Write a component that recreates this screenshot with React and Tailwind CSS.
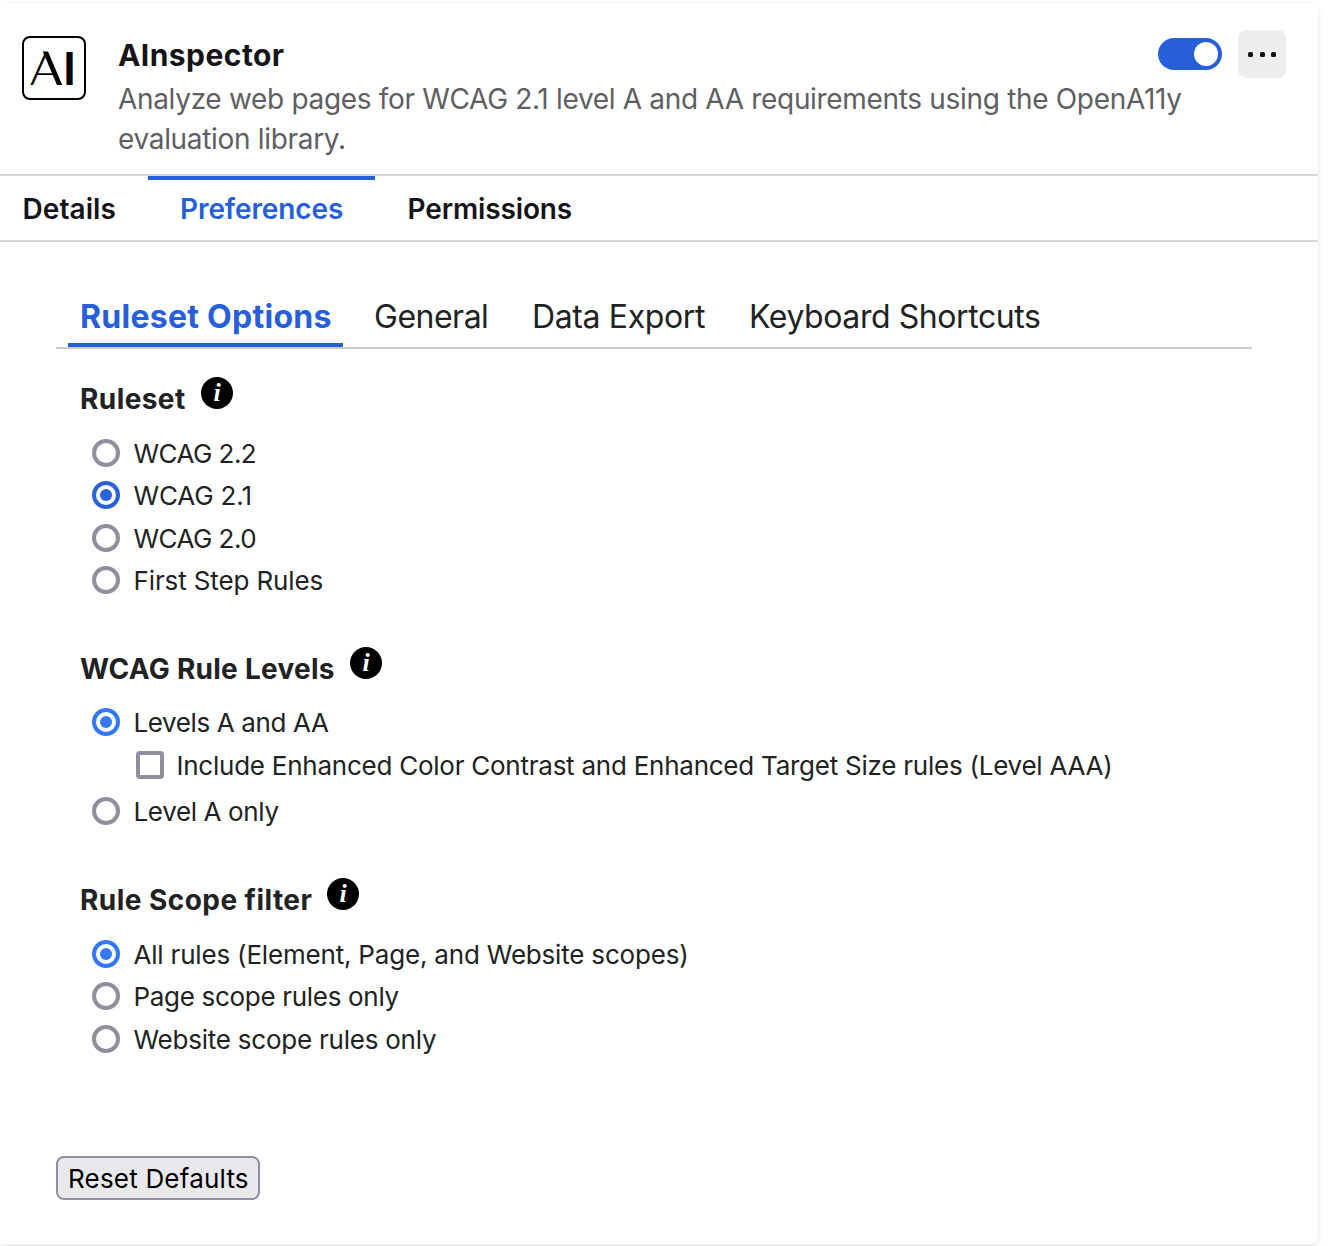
function InfoIcon() {
  return (
    <svg className="size-8 shrink-0" viewBox="0 0 32 32" role="img" aria-label="More information">
      <circle cx="16" cy="16" r="16" fill="#000" />
      <text x="16.2" y="24.4" textAnchor="middle" fill="#fff" fontFamily="'Liberation Serif', serif" fontSize="26" fontWeight="700" fontStyle="italic">i</text>
    </svg>
  );
}

function Logo() {
  return (
    <svg className="size-16 shrink-0" viewBox="0 0 64 64" role="img" aria-label="AInspector logo">
      <defs>
        <clipPath id="logo-inner">
          <rect x="8" y="15.5" width="48" height="33.5" />
        </clipPath>
      </defs>
      <rect x="1" y="1" width="62" height="62" rx="7" fill="#fff" stroke="#000" strokeWidth="2" />
      <text x="7.8" y="49" fontFamily="Lato, sans-serif" fontSize="45.5" fontWeight="300" textLength="32.4" lengthAdjust="spacingAndGlyphs">A</text>
      <path d="M22.6 13.5 38.4 51" stroke="#000" strokeWidth="4.8" clipPath="url(#logo-inner)" />
      <text x="40.8" y="49" fontFamily="Lato, sans-serif" fontSize="45.5" fontWeight="700">I</text>
    </svg>
  );
}

function Heading({ children, className, gap }) {
  return (
    <div className={`flex ${gap}`}>
      <h2 className={`mt-1 h-9 whitespace-nowrap text-[28px] leading-9 font-bold ${className}`}>{children}</h2>
      <InfoIcon />
    </div>
  );
}

function Radio({ children, checked, tone = "border-[#3478f6]", dot = "bg-[#3478f6]", className }) {
  return (
    <label className="flex h-7 items-center gap-[13.5px]">
      <span className={`flex size-7 shrink-0 items-center justify-center rounded-full border-4 ${checked ? tone : "border-[#8f8f9d]"}`}>
        {checked && <span className={`size-3 rounded-full ${dot}`} />}
      </span>
      <span className={`pt-0.5 whitespace-nowrap text-[26px] leading-7 ${className}`}>{children}</span>
    </label>
  );
}

export default function App() {
  return (
    <div className="h-[1246px] w-[1338px] overflow-hidden bg-white pt-1 font-['Inter',sans-serif] text-[#212223]">
      <main className="h-[1240px] w-[1318px] rounded-r-lg bg-white shadow-[0_2px_6px_rgba(0,0,0,0.11)]">
        <header className="flex h-[170px] pl-[22px]">
          <div className="mt-8">
            <Logo />
          </div>
          <div className="ml-8 mt-[31px] w-[1040px] shrink-0 text-[#15141a]">
            <h1 className="text-[30px] leading-10 font-bold tracking-[0.45px]">AInspector</h1>
            <p className="mt-1 whitespace-nowrap text-[28px] leading-10 tracking-[-0.32px] text-[#5e5e63]">
              Analyze web pages for WCAG 2.1 level A and AA requirements using the OpenA11y
              <br />
              evaluation library.
            </p>
          </div>
          <div className="mt-[26px] flex h-12 items-center gap-4">
            <button aria-label="Enable" className="flex h-8 w-16 items-center justify-end rounded-full bg-[#265fd9] pr-1">
              <span className="size-6 rounded-full bg-white" />
            </button>
            <button aria-label="More options" className="flex size-12 items-center justify-center gap-[6.5px] rounded-lg bg-[#eeeeee]">
              <span className="size-[5px] rounded-[1.5px] bg-[#15141a]" />
              <span className="size-[5px] rounded-[1.5px] bg-[#15141a]" />
              <span className="size-[5px] rounded-[1.5px] bg-[#15141a]" />
            </button>
          </div>
        </header>

        <nav className="flex h-[68px] border-y-2 border-[#d7d7db] text-[28px] leading-[59px] font-semibold text-[#15141a]">
          <span className="w-[148px] border-t-4 border-transparent pl-[22.5px] tracking-[0.08px]">Details</span>
          <span className="w-[227px] border-t-4 border-[#265fd9] pl-8 tracking-[-0.09px] text-[#265fd9]">Preferences</span>
          <span className="border-t-4 border-transparent pl-[32.5px] tracking-[-0.13px]">Permissions</span>
        </nav>

        <div className="pl-14">
          <nav className="mt-[43px] flex h-16 w-[1196px] whitespace-nowrap border-b-2 border-[#cccccc] pl-3 text-[32px] leading-[64px]">
            <span className="flex w-[275px] flex-col">
              <span className="h-[58px] shrink-0 pl-3 font-bold tracking-[0.27px] text-[#265fd9]">Ruleset Options</span>
              <span className="h-1 shrink-0 bg-[#265fd9]" />
            </span>
            <span className="w-[157px] pl-[31px] tracking-[-0.5px]">General</span>
            <span className="w-[217px] pl-8 tracking-[-0.37px]">Data Export</span>
            <span className="pl-8 tracking-[-0.43px]">Keyboard Shortcuts</span>
          </nav>

          <section className="mt-7 pl-6">
            <Heading gap="gap-[15.5px]" className="w-[105.5px] tracking-[0.42px]">Ruleset</Heading>
            <div className="mt-[22px] pl-3">
              <Radio className="tracking-[-0.55px]">WCAG 2.2</Radio>
              <div className="mt-[14px]">
                <Radio checked tone="border-[#2a62d9]" dot="bg-[#2a62d9]" className="tracking-[-0.15px]">WCAG 2.1</Radio>
              </div>
              <div className="mt-[15px]">
                <Radio className="tracking-[-0.55px]">WCAG 2.0</Radio>
              </div>
              <div className="mt-[14px]">
                <Radio className="tracking-[-0.12px]">First Step Rules</Radio>
              </div>
            </div>
          </section>

          <section className="mt-[53px] pl-6">
            <Heading gap="gap-[15.5px]" className="w-[254.5px] tracking-[0.25px]">WCAG Rule Levels</Heading>
            <div className="mt-[21px] pl-3">
              <Radio checked className="tracking-[-0.38px]">Levels A and AA</Radio>
              <label className="mt-[15px] ml-11 flex h-7 items-center gap-[12.5px]">
                <span className="size-7 shrink-0 rounded-[4px] border-4 border-[#8f8f9d]" />
                <span className="pt-0.5 whitespace-nowrap text-[26px] leading-7 tracking-[-0.245px]">
                  Include Enhanced Color Contrast and Enhanced Target Size rules (Level AAA)
                </span>
              </label>
              <div className="mt-[18px]">
                <Radio className="tracking-[-0.36px]">Level A only</Radio>
              </div>
            </div>
          </section>

          <section className="mt-[53px] pl-6">
            <Heading gap="gap-[15.5px]" className="w-[231.5px] tracking-[0.45px]">Rule Scope filter</Heading>
            <div className="mt-[22px] pl-3">
              <Radio checked className="tracking-[-0.19px]">All rules (Element, Page, and Website scopes)</Radio>
              <div className="mt-[14px]">
                <Radio className="tracking-[-0.31px]">Page scope rules only</Radio>
              </div>
              <div className="mt-[15px]">
                <Radio className="tracking-[-0.23px]">Website scope rules only</Radio>
              </div>
            </div>
          </section>

          <button className="mt-[103px] flex h-11 w-[204px] items-center whitespace-nowrap rounded-lg border-2 border-[#8f8f9d] bg-[#e9e9ed] pt-0.5 pl-[10px] text-[26px] leading-7 tracking-[0.2px] text-black">
            Reset Defaults
          </button>
        </div>
      </main>
    </div>
  );
}
